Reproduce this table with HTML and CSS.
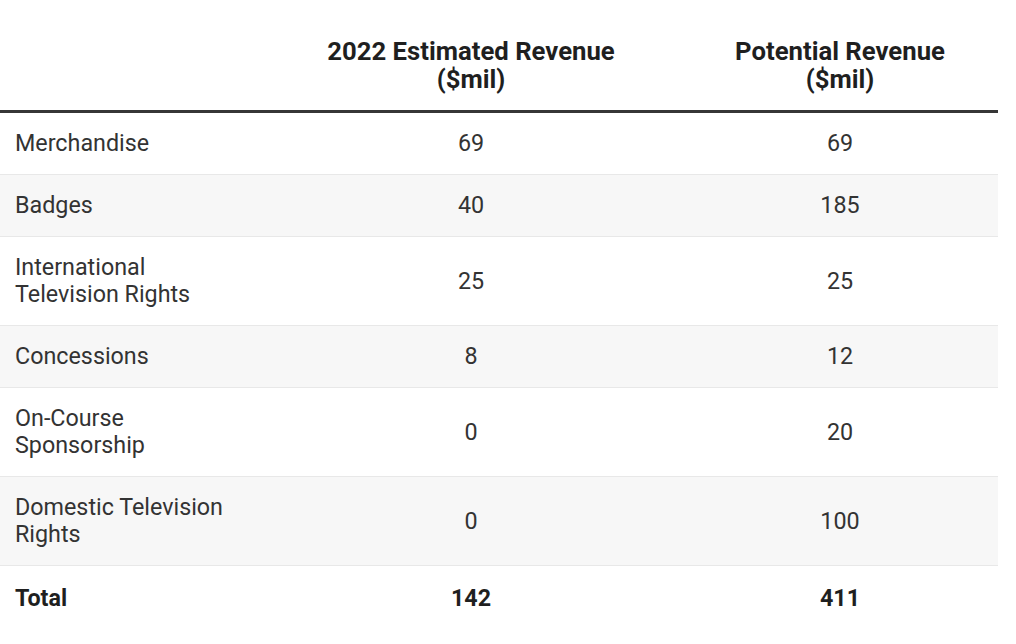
FILE: index.html
```html
<!DOCTYPE html>
<html lang="en">
<head>
<meta charset="utf-8">
<title>Revenue table</title>
<link rel="stylesheet" href="styles.css">
</head>
<body>
<table class="rev">
  <colgroup>
    <col class="c1"><col class="c2"><col class="c3">
  </colgroup>
  <thead>
    <tr>
      <th></th>
      <th>2022 Estimated Revenue<br>($mil)</th>
      <th>Potential Revenue<br>($mil)</th>
    </tr>
  </thead>
  <tbody>
    <tr><td>Merchandise</td><td>69</td><td>69</td></tr>
    <tr class="alt"><td>Badges</td><td>40</td><td>185</td></tr>
    <tr><td>International<br>Television Rights</td><td>25</td><td>25</td></tr>
    <tr class="alt"><td>Concessions</td><td>8</td><td>12</td></tr>
    <tr><td>On-Course<br>Sponsorship</td><td>0</td><td>20</td></tr>
    <tr class="alt"><td>Domestic Television<br>Rights</td><td>0</td><td>100</td></tr>
    <tr class="total"><td>Total</td><td>142</td><td>411</td></tr>
  </tbody>
</table>
</body>
</html>
```
FILE: styles.css
```css
html, body {
  margin: 0;
  padding: 0;
  background: #ffffff;
}
body {
  font-family: Roboto, "Liberation Sans", sans-serif;
  color: #333333;
}
.rev {
  width: 998px;
  border-collapse: collapse;
  table-layout: fixed;
  font-size: 23.3px;
  line-height: 27px;
}
.c1 { width: 260px; }
.c2 { width: 422px; }
.c3 { width: 316px; }
.rev th {
  font-size: 25.7px;
  line-height: 28px;
  font-weight: 700;
  color: #1f1f1f;
  text-align: center;
  vertical-align: bottom;
  padding: 37px 15px 17px;
  border-bottom: 3px solid #363636;
}
.rev td {
  padding: 17px 15px 17px;
  text-align: center;
  vertical-align: middle;
  border-bottom: 1px solid #e8e8e8;
}
.rev td:first-child {
  text-align: left;
}
.rev tr.alt td {
  background: #f7f7f7;
}
.rev tr.total td {
  padding-top: 19px;
  font-weight: 700;
  color: #1f1f1f;
  border-bottom: none;
}
```
